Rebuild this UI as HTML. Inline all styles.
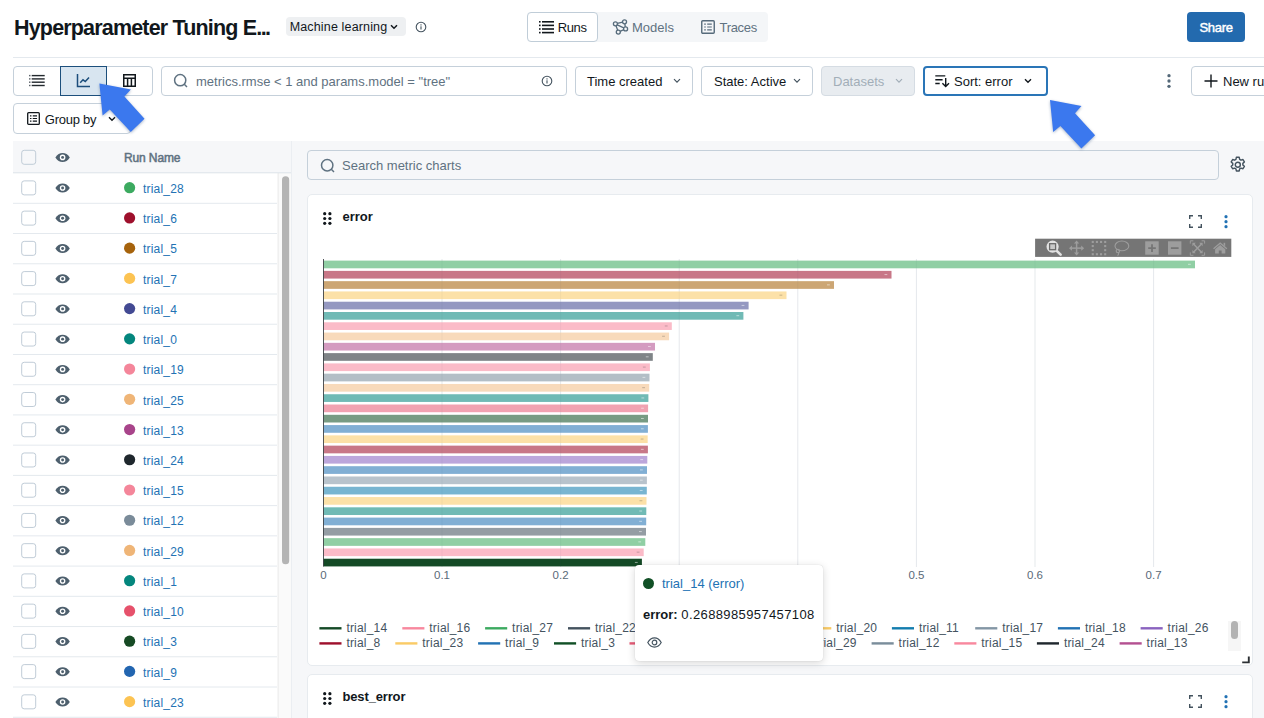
<!DOCTYPE html>
<html><head><meta charset="utf-8">
<style>
*{box-sizing:border-box;margin:0;padding:0}
html,body{width:1264px;height:718px;overflow:hidden;background:#fff}
body{font-family:"Liberation Sans",sans-serif;color:#11171c;font-size:13px;position:relative}
.abs{position:absolute}
.t{position:absolute;white-space:nowrap;line-height:1}
.btn{position:absolute;border:1px solid #c5d0da;border-radius:4px;background:#fff}
svg{position:absolute;overflow:visible}
</style></head><body>

<!-- HEADER -->
<div class="t" id="title" style="left:14px;top:17.8px;font-size:21.5px;font-weight:bold;letter-spacing:-0.83px">Hyperparameter Tuning E<span style="letter-spacing:-1.5px">...</span></div>
<div class="abs" style="left:286px;top:17px;width:120px;height:19px;background:#eef0f2;border-radius:4px"></div>
<div class="t" id="ml" style="left:289.7px;top:20.5px;font-size:12.5px;letter-spacing:0.15px">Machine learning</div>
<svg style="left:389px;top:23px" width="10" height="8" viewBox="0 0 10 8"><path d="M2 2.2 L5 5.2 L8 2.2" fill="none" stroke="#11171c" stroke-width="1.5"/></svg>
<svg style="left:415px;top:21px" width="12" height="12" viewBox="0 0 12 12"><circle cx="6" cy="6" r="4.8" fill="none" stroke="#44535f" stroke-width="1.1"/><rect x="5.45" y="5.3" width="1.1" height="3.2" fill="#44535f"/><rect x="5.45" y="3.3" width="1.1" height="1.2" fill="#44535f"/></svg>

<!-- segmented -->
<div class="abs" style="left:527px;top:12px;width:241px;height:30px;background:#f4f6f8;border-radius:4px"></div>
<div class="btn" style="left:527px;top:12px;width:71px;height:30px;border-color:#c0cdd8"></div>
<svg style="left:539px;top:20px" width="16" height="14" viewBox="0 0 16 14"><g fill="#11171c"><rect x="0" y="1" width="1.6" height="1.6"/><rect x="3" y="1" width="12" height="1.6"/><rect x="0" y="4.6" width="1.6" height="1.6"/><rect x="3" y="4.6" width="12" height="1.6"/><rect x="0" y="8.2" width="1.6" height="1.6"/><rect x="3" y="8.2" width="12" height="1.6"/><rect x="0" y="11.8" width="1.6" height="1.6"/><rect x="3" y="11.8" width="12" height="1.6"/></g></svg>
<div class="t" id="runs" style="left:557.8px;top:20.6px;font-size:13px;letter-spacing:-0.4px">Runs</div>
<div class="t" id="models" style="left:632px;top:20.6px;font-size:13px;color:#5f7281">Models</div>
<div class="t" id="traces" style="left:719.5px;top:20.6px;font-size:13px;letter-spacing:-0.3px;color:#5f7281">Traces</div>

<!-- share -->
<div class="abs" style="left:1187px;top:12px;width:58px;height:30px;background:#236aae;border-radius:4px"></div>
<div class="t" id="share" style="left:1199.5px;top:20.6px;font-size:13px;letter-spacing:-0.3px;-webkit-text-stroke:0.45px #fff;color:#fff">Share</div>

<div class="abs" style="left:13px;top:57px;width:1251px;height:1px;background:#e4e9ee"></div>

<!-- TOOLBAR -->
<div class="btn" style="left:13px;top:66px;width:140px;height:30px"></div>
<div class="abs" style="left:60px;top:66px;width:47px;height:30px;background:#d8e5f0;border:1px solid #1c4f7c"></div>
<div class="btn" style="left:161px;top:66px;width:406px;height:30px"></div>
<div class="t" id="q" style="left:196px;top:74.6px;font-size:13px;color:#5f7281">metrics.rmse &lt; 1 and params.model = "tree"</div>
<div class="btn" style="left:575px;top:66px;width:118px;height:30px"></div>
<div class="t" id="tc" style="left:587px;top:74.6px;font-size:13px">Time created</div>
<div class="btn" style="left:701px;top:66px;width:112px;height:30px"></div>
<div class="t" id="sa" style="left:714px;top:74.6px;font-size:13px">State: Active</div>
<div class="btn" style="left:821px;top:66px;width:94px;height:30px;background:#e8ecf0;border-color:#d5dce3"></div>
<div class="t" id="ds" style="left:833px;top:74.6px;font-size:13px;color:#a2aeb8">Datasets</div>
<div class="btn" style="left:923px;top:66px;width:125px;height:30px;border:2px solid #2a75b7"></div>
<div class="t" id="so" style="left:954px;top:74.6px;font-size:13px">Sort: error</div>
<div class="btn" style="left:1191px;top:66px;width:90px;height:30px"></div>
<div class="t" id="nr" style="left:1223px;top:74.6px;font-size:13px">New run</div>

<div class="btn" style="left:13px;top:103px;width:118px;height:31px"></div>
<div class="t" id="gb" style="left:44.8px;top:112.6px;font-size:13px;letter-spacing:-0.25px">Group by</div>


<!-- toolbar icons -->
<svg style="left:29.3px;top:74.3px" width="16" height="14" viewBox="0 0 16 14"><g fill="#23292e"><rect x="0" y="0.9" width="1.5" height="1.4" fill="#5a6168"/><rect x="2.7" y="0.9" width="13" height="1.4"/><rect x="0" y="4.2" width="1.5" height="1.4" fill="#5a6168"/><rect x="2.7" y="4.2" width="13" height="1.4"/><rect x="0" y="7.5" width="1.5" height="1.4" fill="#5a6168"/><rect x="2.7" y="7.5" width="13" height="1.4"/><rect x="0" y="10.8" width="1.5" height="1.4" fill="#5a6168"/><rect x="2.7" y="10.8" width="13" height="1.4"/></g></svg>
<svg style="left:76px;top:73px" width="16" height="16" viewBox="0 0 16 16"><path d="M1.5 1 V13.5 H14" fill="none" stroke="#1b4d7b" stroke-width="1.5"/><path d="M4.2 9.8 L7 6.8 L9.3 8.6 L13 4.6" fill="none" stroke="#1b4d7b" stroke-width="1.5"/></svg>
<svg style="left:123px;top:74.2px" width="13" height="13" viewBox="0 0 13 13"><rect x="0.75" y="0.75" width="11.5" height="11.5" fill="none" stroke="#11171c" stroke-width="1.5"/><path d="M0.75 4.3 H12.25 M4.6 4.3 V12.25 M8.4 4.3 V12.25" stroke="#11171c" stroke-width="1.5" fill="none"/></svg>
<svg style="left:173px;top:73px" width="16" height="16" viewBox="0 0 16 16"><circle cx="7.2" cy="7.2" r="5.6" fill="none" stroke="#5f7281" stroke-width="1.5"/><path d="M11.3 11.3 L14 14" stroke="#5f7281" stroke-width="1.5"/></svg>
<svg style="left:541px;top:75px" width="12" height="12" viewBox="0 0 12 12"><circle cx="6" cy="6" r="4.8" fill="none" stroke="#44535f" stroke-width="1.1"/><rect x="5.45" y="5.3" width="1.1" height="3.2" fill="#44535f"/><rect x="5.45" y="3.3" width="1.1" height="1.2" fill="#44535f"/></svg>
<svg style="left:672px;top:77px" width="10" height="8" viewBox="0 0 10 8"><path d="M2 2.2 L5 5.2 L8 2.2" fill="none" stroke="#44535f" stroke-width="1.2"/></svg>
<svg style="left:792px;top:77px" width="10" height="8" viewBox="0 0 10 8"><path d="M2 2.2 L5 5.2 L8 2.2" fill="none" stroke="#44535f" stroke-width="1.2"/></svg>
<svg style="left:894px;top:77px" width="10" height="8" viewBox="0 0 10 8"><path d="M2 2.2 L5 5.2 L8 2.2" fill="none" stroke="#a2aeb8" stroke-width="1.2"/></svg>
<svg style="left:1023px;top:77px" width="10" height="8" viewBox="0 0 10 8"><path d="M2 2.2 L5 5.2 L8 2.2" fill="none" stroke="#11171c" stroke-width="1.4"/></svg>
<svg style="left:0;top:0" width="1264" height="718" viewBox="0 0 1264 718"><path d="M935.3 75.9 H945.3 M935.3 79.7 H942.6 M935.3 83.5 H939.7" stroke="#11171c" stroke-width="1.4" fill="none"/><path d="M945.7 78 V86.4 M942.4 83.3 L945.7 86.6 L949 83.3" stroke="#11171c" stroke-width="1.4" fill="none"/></svg>
<svg style="left:1167px;top:73px" width="4" height="16" viewBox="0 0 4 16"><circle cx="2" cy="2.7" r="1.65" fill="#536878"/><circle cx="2" cy="8" r="1.65" fill="#536878"/><circle cx="2" cy="13.3" r="1.65" fill="#536878"/></svg>
<svg style="left:1204px;top:74px" width="14" height="14" viewBox="0 0 14 14"><path d="M7 0.5 V13.5 M0.5 7 H13.5" stroke="#11171c" stroke-width="1.4"/></svg>
<svg style="left:26.6px;top:112px" width="13" height="13" viewBox="0 0 14 14"><rect x="0.75" y="0.75" width="12.5" height="12.5" rx="1" fill="none" stroke="#11171c" stroke-width="1.4"/><path d="M3.2 4.2 H4.8 M6.2 4.2 H10.8 M3.2 7 H4.8 M6.2 7 H10.8 M3.2 9.8 H4.8 M6.2 9.8 H10.8" stroke="#11171c" stroke-width="1.3"/></svg>
<svg style="left:107px;top:115px" width="10" height="8" viewBox="0 0 10 8"><path d="M2 2.2 L5 5.2 L8 2.2" fill="none" stroke="#11171c" stroke-width="1.4"/></svg>
<!-- segmented icons -->
<svg style="left:606px;top:14px" width="30" height="26" viewBox="0 0 30 26"><g fill="none" stroke="#566b7b" stroke-width="1.3"><circle cx="9.4" cy="9.8" r="2"/><circle cx="18.55" cy="7.8" r="2"/><circle cx="19.6" cy="14.9" r="2"/><circle cx="12.3" cy="18.1" r="2"/><path d="M11.4 9.4 L16.6 8.2 M11.2 10.8 L17.8 13.9 M10 11.8 L11.7 16.2 M18.85 9.8 L19.3 12.9 M17.8 15.7 L14.1 17.3"/></g></svg>
<svg style="left:700.5px;top:20px" width="14" height="14" viewBox="0 0 14 14"><rect x="0.75" y="0.75" width="12.5" height="12.5" rx="1" fill="none" stroke="#566b7b" stroke-width="1.4"/><path d="M3.2 4.2 H4.8 M6.2 4.2 H10.8 M3.2 7 H4.8 M6.2 7 H10.8 M3.2 9.8 H4.8 M6.2 9.8 H10.8" stroke="#566b7b" stroke-width="1.2"/></svg>
<!--LEFT-->
<div class="abs" style="left:13px;top:141px;width:1251px;height:580px;background:#f6f7f9"></div>
<svg style="left:0;top:0" width="1264" height="718" viewBox="0 0 1264 718"><rect x="13" y="172.8" width="278.5" height="546" fill="#fff"/><rect x="291" y="141" width="1" height="580" fill="#ebeef2"/><rect x="278" y="173" width="13" height="546" fill="#fafafa"/><rect x="277.6" y="173" width="1" height="546" fill="#e9e9e9"/><rect x="21.7" y="150.30" width="14" height="14" rx="2.5" fill="#f6f7f9" stroke="#c0ccd7" stroke-width="1"/><g transform="translate(55.2,152.70000000000002)"><path d="M0.2 4.7 C2 1.5 4.6 0.2 7.4 0.2 C10.2 0.2 12.8 1.5 14.6 4.7 C12.8 7.9 10.2 9.2 7.4 9.2 C4.6 9.2 2 7.9 0.2 4.7 Z" fill="#4d5f6d"/><circle cx="7.4" cy="4.7" r="2.8" fill="#fff"/><circle cx="7.4" cy="4.7" r="1.45" fill="#4d5f6d"/></g><rect x="13" y="172.3" width="278" height="1" fill="#dce3e9"/><rect x="21.7" y="180.89" width="14" height="14" rx="2.5" fill="#fff" stroke="#c0ccd7" stroke-width="1"/><g transform="translate(55.2,183.29)"><path d="M0.2 4.7 C2 1.5 4.6 0.2 7.4 0.2 C10.2 0.2 12.8 1.5 14.6 4.7 C12.8 7.9 10.2 9.2 7.4 9.2 C4.6 9.2 2 7.9 0.2 4.7 Z" fill="#4d5f6d"/><circle cx="7.4" cy="4.7" r="2.8" fill="#fff"/><circle cx="7.4" cy="4.7" r="1.45" fill="#4d5f6d"/></g><circle cx="129.6" cy="187.69" r="5.6" fill="#3caa60"/><rect x="13" y="202.80" width="264" height="1" fill="#e4e9ee"/><rect x="21.7" y="211.12" width="14" height="14" rx="2.5" fill="#fff" stroke="#c0ccd7" stroke-width="1"/><g transform="translate(55.2,213.52)"><path d="M0.2 4.7 C2 1.5 4.6 0.2 7.4 0.2 C10.2 0.2 12.8 1.5 14.6 4.7 C12.8 7.9 10.2 9.2 7.4 9.2 C4.6 9.2 2 7.9 0.2 4.7 Z" fill="#4d5f6d"/><circle cx="7.4" cy="4.7" r="2.8" fill="#fff"/><circle cx="7.4" cy="4.7" r="1.45" fill="#4d5f6d"/></g><circle cx="129.6" cy="217.92" r="5.6" fill="#9e102c"/><rect x="13" y="233.03" width="264" height="1" fill="#e4e9ee"/><rect x="21.7" y="241.35" width="14" height="14" rx="2.5" fill="#fff" stroke="#c0ccd7" stroke-width="1"/><g transform="translate(55.2,243.75)"><path d="M0.2 4.7 C2 1.5 4.6 0.2 7.4 0.2 C10.2 0.2 12.8 1.5 14.6 4.7 C12.8 7.9 10.2 9.2 7.4 9.2 C4.6 9.2 2 7.9 0.2 4.7 Z" fill="#4d5f6d"/><circle cx="7.4" cy="4.7" r="2.8" fill="#fff"/><circle cx="7.4" cy="4.7" r="1.45" fill="#4d5f6d"/></g><circle cx="129.6" cy="248.15" r="5.6" fill="#a6630c"/><rect x="13" y="263.27" width="264" height="1" fill="#e4e9ee"/><rect x="21.7" y="271.58" width="14" height="14" rx="2.5" fill="#fff" stroke="#c0ccd7" stroke-width="1"/><g transform="translate(55.2,273.98)"><path d="M0.2 4.7 C2 1.5 4.6 0.2 7.4 0.2 C10.2 0.2 12.8 1.5 14.6 4.7 C12.8 7.9 10.2 9.2 7.4 9.2 C4.6 9.2 2 7.9 0.2 4.7 Z" fill="#4d5f6d"/><circle cx="7.4" cy="4.7" r="2.8" fill="#fff"/><circle cx="7.4" cy="4.7" r="1.45" fill="#4d5f6d"/></g><circle cx="129.6" cy="278.38" r="5.6" fill="#fcc352"/><rect x="13" y="293.50" width="264" height="1" fill="#e4e9ee"/><rect x="21.7" y="301.81" width="14" height="14" rx="2.5" fill="#fff" stroke="#c0ccd7" stroke-width="1"/><g transform="translate(55.2,304.21)"><path d="M0.2 4.7 C2 1.5 4.6 0.2 7.4 0.2 C10.2 0.2 12.8 1.5 14.6 4.7 C12.8 7.9 10.2 9.2 7.4 9.2 C4.6 9.2 2 7.9 0.2 4.7 Z" fill="#4d5f6d"/><circle cx="7.4" cy="4.7" r="2.8" fill="#fff"/><circle cx="7.4" cy="4.7" r="1.45" fill="#4d5f6d"/></g><circle cx="129.6" cy="308.61" r="5.6" fill="#434a93"/><rect x="13" y="323.73" width="264" height="1" fill="#e4e9ee"/><rect x="21.7" y="332.05" width="14" height="14" rx="2.5" fill="#fff" stroke="#c0ccd7" stroke-width="1"/><g transform="translate(55.2,334.45)"><path d="M0.2 4.7 C2 1.5 4.6 0.2 7.4 0.2 C10.2 0.2 12.8 1.5 14.6 4.7 C12.8 7.9 10.2 9.2 7.4 9.2 C4.6 9.2 2 7.9 0.2 4.7 Z" fill="#4d5f6d"/><circle cx="7.4" cy="4.7" r="2.8" fill="#fff"/><circle cx="7.4" cy="4.7" r="1.45" fill="#4d5f6d"/></g><circle cx="129.6" cy="338.85" r="5.6" fill="#04867d"/><rect x="13" y="353.96" width="264" height="1" fill="#e4e9ee"/><rect x="21.7" y="362.28" width="14" height="14" rx="2.5" fill="#fff" stroke="#c0ccd7" stroke-width="1"/><g transform="translate(55.2,364.68)"><path d="M0.2 4.7 C2 1.5 4.6 0.2 7.4 0.2 C10.2 0.2 12.8 1.5 14.6 4.7 C12.8 7.9 10.2 9.2 7.4 9.2 C4.6 9.2 2 7.9 0.2 4.7 Z" fill="#4d5f6d"/><circle cx="7.4" cy="4.7" r="2.8" fill="#fff"/><circle cx="7.4" cy="4.7" r="1.45" fill="#4d5f6d"/></g><circle cx="129.6" cy="369.08" r="5.6" fill="#f4869a"/><rect x="13" y="384.19" width="264" height="1" fill="#e4e9ee"/><rect x="21.7" y="392.51" width="14" height="14" rx="2.5" fill="#fff" stroke="#c0ccd7" stroke-width="1"/><g transform="translate(55.2,394.91)"><path d="M0.2 4.7 C2 1.5 4.6 0.2 7.4 0.2 C10.2 0.2 12.8 1.5 14.6 4.7 C12.8 7.9 10.2 9.2 7.4 9.2 C4.6 9.2 2 7.9 0.2 4.7 Z" fill="#4d5f6d"/><circle cx="7.4" cy="4.7" r="2.8" fill="#fff"/><circle cx="7.4" cy="4.7" r="1.45" fill="#4d5f6d"/></g><circle cx="129.6" cy="399.31" r="5.6" fill="#efb577"/><rect x="13" y="414.43" width="264" height="1" fill="#e4e9ee"/><rect x="21.7" y="422.74" width="14" height="14" rx="2.5" fill="#fff" stroke="#c0ccd7" stroke-width="1"/><g transform="translate(55.2,425.14)"><path d="M0.2 4.7 C2 1.5 4.6 0.2 7.4 0.2 C10.2 0.2 12.8 1.5 14.6 4.7 C12.8 7.9 10.2 9.2 7.4 9.2 C4.6 9.2 2 7.9 0.2 4.7 Z" fill="#4d5f6d"/><circle cx="7.4" cy="4.7" r="2.8" fill="#fff"/><circle cx="7.4" cy="4.7" r="1.45" fill="#4d5f6d"/></g><circle cx="129.6" cy="429.54" r="5.6" fill="#a8448a"/><rect x="13" y="444.66" width="264" height="1" fill="#e4e9ee"/><rect x="21.7" y="452.97" width="14" height="14" rx="2.5" fill="#fff" stroke="#c0ccd7" stroke-width="1"/><g transform="translate(55.2,455.37)"><path d="M0.2 4.7 C2 1.5 4.6 0.2 7.4 0.2 C10.2 0.2 12.8 1.5 14.6 4.7 C12.8 7.9 10.2 9.2 7.4 9.2 C4.6 9.2 2 7.9 0.2 4.7 Z" fill="#4d5f6d"/><circle cx="7.4" cy="4.7" r="2.8" fill="#fff"/><circle cx="7.4" cy="4.7" r="1.45" fill="#4d5f6d"/></g><circle cx="129.6" cy="459.77" r="5.6" fill="#1f272d"/><rect x="13" y="474.89" width="264" height="1" fill="#e4e9ee"/><rect x="21.7" y="483.21" width="14" height="14" rx="2.5" fill="#fff" stroke="#c0ccd7" stroke-width="1"/><g transform="translate(55.2,485.61)"><path d="M0.2 4.7 C2 1.5 4.6 0.2 7.4 0.2 C10.2 0.2 12.8 1.5 14.6 4.7 C12.8 7.9 10.2 9.2 7.4 9.2 C4.6 9.2 2 7.9 0.2 4.7 Z" fill="#4d5f6d"/><circle cx="7.4" cy="4.7" r="2.8" fill="#fff"/><circle cx="7.4" cy="4.7" r="1.45" fill="#4d5f6d"/></g><circle cx="129.6" cy="490.01" r="5.6" fill="#f4869a"/><rect x="13" y="505.12" width="264" height="1" fill="#e4e9ee"/><rect x="21.7" y="513.44" width="14" height="14" rx="2.5" fill="#fff" stroke="#c0ccd7" stroke-width="1"/><g transform="translate(55.2,515.84)"><path d="M0.2 4.7 C2 1.5 4.6 0.2 7.4 0.2 C10.2 0.2 12.8 1.5 14.6 4.7 C12.8 7.9 10.2 9.2 7.4 9.2 C4.6 9.2 2 7.9 0.2 4.7 Z" fill="#4d5f6d"/><circle cx="7.4" cy="4.7" r="2.8" fill="#fff"/><circle cx="7.4" cy="4.7" r="1.45" fill="#4d5f6d"/></g><circle cx="129.6" cy="520.24" r="5.6" fill="#7a8b99"/><rect x="13" y="535.35" width="264" height="1" fill="#e4e9ee"/><rect x="21.7" y="543.67" width="14" height="14" rx="2.5" fill="#fff" stroke="#c0ccd7" stroke-width="1"/><g transform="translate(55.2,546.07)"><path d="M0.2 4.7 C2 1.5 4.6 0.2 7.4 0.2 C10.2 0.2 12.8 1.5 14.6 4.7 C12.8 7.9 10.2 9.2 7.4 9.2 C4.6 9.2 2 7.9 0.2 4.7 Z" fill="#4d5f6d"/><circle cx="7.4" cy="4.7" r="2.8" fill="#fff"/><circle cx="7.4" cy="4.7" r="1.45" fill="#4d5f6d"/></g><circle cx="129.6" cy="550.47" r="5.6" fill="#efb577"/><rect x="13" y="565.59" width="264" height="1" fill="#e4e9ee"/><rect x="21.7" y="573.90" width="14" height="14" rx="2.5" fill="#fff" stroke="#c0ccd7" stroke-width="1"/><g transform="translate(55.2,576.3)"><path d="M0.2 4.7 C2 1.5 4.6 0.2 7.4 0.2 C10.2 0.2 12.8 1.5 14.6 4.7 C12.8 7.9 10.2 9.2 7.4 9.2 C4.6 9.2 2 7.9 0.2 4.7 Z" fill="#4d5f6d"/><circle cx="7.4" cy="4.7" r="2.8" fill="#fff"/><circle cx="7.4" cy="4.7" r="1.45" fill="#4d5f6d"/></g><circle cx="129.6" cy="580.70" r="5.6" fill="#04867d"/><rect x="13" y="595.82" width="264" height="1" fill="#e4e9ee"/><rect x="21.7" y="604.13" width="14" height="14" rx="2.5" fill="#fff" stroke="#c0ccd7" stroke-width="1"/><g transform="translate(55.2,606.53)"><path d="M0.2 4.7 C2 1.5 4.6 0.2 7.4 0.2 C10.2 0.2 12.8 1.5 14.6 4.7 C12.8 7.9 10.2 9.2 7.4 9.2 C4.6 9.2 2 7.9 0.2 4.7 Z" fill="#4d5f6d"/><circle cx="7.4" cy="4.7" r="2.8" fill="#fff"/><circle cx="7.4" cy="4.7" r="1.45" fill="#4d5f6d"/></g><circle cx="129.6" cy="610.93" r="5.6" fill="#e6516b"/><rect x="13" y="626.05" width="264" height="1" fill="#e4e9ee"/><rect x="21.7" y="634.37" width="14" height="14" rx="2.5" fill="#fff" stroke="#c0ccd7" stroke-width="1"/><g transform="translate(55.2,636.77)"><path d="M0.2 4.7 C2 1.5 4.6 0.2 7.4 0.2 C10.2 0.2 12.8 1.5 14.6 4.7 C12.8 7.9 10.2 9.2 7.4 9.2 C4.6 9.2 2 7.9 0.2 4.7 Z" fill="#4d5f6d"/><circle cx="7.4" cy="4.7" r="2.8" fill="#fff"/><circle cx="7.4" cy="4.7" r="1.45" fill="#4d5f6d"/></g><circle cx="129.6" cy="641.17" r="5.6" fill="#164a24"/><rect x="13" y="656.28" width="264" height="1" fill="#e4e9ee"/><rect x="21.7" y="664.60" width="14" height="14" rx="2.5" fill="#fff" stroke="#c0ccd7" stroke-width="1"/><g transform="translate(55.2,667.0)"><path d="M0.2 4.7 C2 1.5 4.6 0.2 7.4 0.2 C10.2 0.2 12.8 1.5 14.6 4.7 C12.8 7.9 10.2 9.2 7.4 9.2 C4.6 9.2 2 7.9 0.2 4.7 Z" fill="#4d5f6d"/><circle cx="7.4" cy="4.7" r="2.8" fill="#fff"/><circle cx="7.4" cy="4.7" r="1.45" fill="#4d5f6d"/></g><circle cx="129.6" cy="671.40" r="5.6" fill="#2265b0"/><rect x="13" y="686.51" width="264" height="1" fill="#e4e9ee"/><rect x="21.7" y="694.83" width="14" height="14" rx="2.5" fill="#fff" stroke="#c0ccd7" stroke-width="1"/><g transform="translate(55.2,697.23)"><path d="M0.2 4.7 C2 1.5 4.6 0.2 7.4 0.2 C10.2 0.2 12.8 1.5 14.6 4.7 C12.8 7.9 10.2 9.2 7.4 9.2 C4.6 9.2 2 7.9 0.2 4.7 Z" fill="#4d5f6d"/><circle cx="7.4" cy="4.7" r="2.8" fill="#fff"/><circle cx="7.4" cy="4.7" r="1.45" fill="#4d5f6d"/></g><circle cx="129.6" cy="701.63" r="5.6" fill="#fcc352"/><rect x="13" y="716.75" width="264" height="1" fill="#e4e9ee"/><rect x="282" y="176.3" width="7.2" height="388" rx="3.6" fill="#b4b4b4"/></svg>
<div class="t" id="rn" style="left:124px;top:152.4px;font-size:12px;letter-spacing:-0.12px;-webkit-text-stroke:0.5px #5f7281;color:#5f7281">Run Name</div>
<div class="t" style="left:143px;top:182.89px;font-size:12px;letter-spacing:0.2px;color:#2272b4">trial_28</div>
<div class="t" style="left:143px;top:213.12px;font-size:12px;letter-spacing:0.2px;color:#2272b4">trial_6</div>
<div class="t" style="left:143px;top:243.35px;font-size:12px;letter-spacing:0.2px;color:#2272b4">trial_5</div>
<div class="t" style="left:143px;top:273.58px;font-size:12px;letter-spacing:0.2px;color:#2272b4">trial_7</div>
<div class="t" style="left:143px;top:303.81px;font-size:12px;letter-spacing:0.2px;color:#2272b4">trial_4</div>
<div class="t" style="left:143px;top:334.05px;font-size:12px;letter-spacing:0.2px;color:#2272b4">trial_0</div>
<div class="t" style="left:143px;top:364.28px;font-size:12px;letter-spacing:0.2px;color:#2272b4">trial_19</div>
<div class="t" style="left:143px;top:394.51px;font-size:12px;letter-spacing:0.2px;color:#2272b4">trial_25</div>
<div class="t" style="left:143px;top:424.74px;font-size:12px;letter-spacing:0.2px;color:#2272b4">trial_13</div>
<div class="t" style="left:143px;top:454.97px;font-size:12px;letter-spacing:0.2px;color:#2272b4">trial_24</div>
<div class="t" style="left:143px;top:485.21px;font-size:12px;letter-spacing:0.2px;color:#2272b4">trial_15</div>
<div class="t" style="left:143px;top:515.44px;font-size:12px;letter-spacing:0.2px;color:#2272b4">trial_12</div>
<div class="t" style="left:143px;top:545.67px;font-size:12px;letter-spacing:0.2px;color:#2272b4">trial_29</div>
<div class="t" style="left:143px;top:575.90px;font-size:12px;letter-spacing:0.2px;color:#2272b4">trial_1</div>
<div class="t" style="left:143px;top:606.13px;font-size:12px;letter-spacing:0.2px;color:#2272b4">trial_10</div>
<div class="t" style="left:143px;top:636.37px;font-size:12px;letter-spacing:0.2px;color:#2272b4">trial_3</div>
<div class="t" style="left:143px;top:666.60px;font-size:12px;letter-spacing:0.2px;color:#2272b4">trial_9</div>
<div class="t" style="left:143px;top:696.83px;font-size:12px;letter-spacing:0.2px;color:#2272b4">trial_23</div>
<!--/LEFT-->
<!--RIGHT-->
<div class="btn" style="left:307px;top:150px;width:912px;height:30px;background:#f6f7f9;border-color:#c5d0da"></div>
<svg style="left:319.7px;top:157.5px" width="16" height="16" viewBox="0 0 16 16"><circle cx="7.2" cy="7.2" r="5.7" fill="none" stroke="#5f7281" stroke-width="1.5"/><path d="M11.3 11.3 L14 14" stroke="#5f7281" stroke-width="1.5"/></svg>
<div class="t" id="smc" style="left:342px;top:158.5px;font-size:13px;color:#5f7281">Search metric charts</div>
<svg style="left:1229.2px;top:156.3px" width="17.6" height="17.6" viewBox="0 0 16 16"><g fill="none" stroke="#44535f" stroke-width="1.3"><circle cx="8" cy="8" r="2.3"/><path d="M6.7 1.2h2.6l.4 1.9 1.2.7 1.8-.6 1.3 2.2-1.4 1.3v1.4l1.4 1.3-1.3 2.2-1.8-.6-1.2.7-.4 1.9H6.7l-.4-1.9-1.2-.7-1.8.6L2 9.4l1.4-1.3V6.7L2 5.4l1.3-2.2 1.8.6 1.2-.7z" stroke-linejoin="round"/></g></svg>
<div class="abs" style="left:307px;top:194px;width:946px;height:472px;background:#fff;border:1px solid #e7ebef;border-radius:5px"></div>
<div class="abs" style="left:307px;top:674px;width:946px;height:60px;background:#fff;border:1px solid #e7ebef;border-radius:5px"></div>
<svg style="left:322.7px;top:212px" width="9" height="13" viewBox="0 0 9 13"><g fill="#11171c"><circle cx="1.7" cy="1.7" r="1.6"/><circle cx="6.9" cy="1.7" r="1.6"/><circle cx="1.7" cy="6.5" r="1.6"/><circle cx="6.9" cy="6.5" r="1.6"/><circle cx="1.7" cy="11.3" r="1.6"/><circle cx="6.9" cy="11.3" r="1.6"/></g></svg>
<div class="t" id="err" style="left:342.5px;top:209.5px;font-size:13px;font-weight:bold">error</div>
<svg style="left:1188.8px;top:215.2px" width="13" height="13" viewBox="0 0 13 13"><path d="M0.7 4 V0.7 H4 M9 0.7 H12.3 V4 M12.3 9 V12.3 H9 M4 12.3 H0.7 V9" fill="none" stroke="#44535f" stroke-width="1.4"/></svg>
<svg style="left:1223.8px;top:215px" width="4" height="14" viewBox="0 0 4 14"><circle cx="2" cy="1.7" r="1.6" fill="#2272b4"/><circle cx="2" cy="6.7" r="1.6" fill="#2272b4"/><circle cx="2" cy="11.7" r="1.6" fill="#2272b4"/></svg>
<svg style="left:322.7px;top:692px" width="9" height="13" viewBox="0 0 9 13"><g fill="#11171c"><circle cx="1.7" cy="1.7" r="1.6"/><circle cx="6.9" cy="1.7" r="1.6"/><circle cx="1.7" cy="6.5" r="1.6"/><circle cx="6.9" cy="6.5" r="1.6"/><circle cx="1.7" cy="11.3" r="1.6"/><circle cx="6.9" cy="11.3" r="1.6"/></g></svg>
<div class="t" id="berr" style="left:342.5px;top:689.5px;font-size:13px;font-weight:bold;letter-spacing:-0.15px">best_error</div>
<svg style="left:1188.8px;top:695.2px" width="13" height="13" viewBox="0 0 13 13"><path d="M0.7 4 V0.7 H4 M9 0.7 H12.3 V4 M12.3 9 V12.3 H9 M4 12.3 H0.7 V9" fill="none" stroke="#44535f" stroke-width="1.4"/></svg>
<svg style="left:1223.8px;top:695px" width="4" height="14" viewBox="0 0 4 14"><circle cx="2" cy="1.7" r="1.6" fill="#2272b4"/><circle cx="2" cy="6.7" r="1.6" fill="#2272b4"/><circle cx="2" cy="11.7" r="1.6" fill="#2272b4"/></svg>
<svg style="left:0;top:0" width="1264" height="718" viewBox="0 0 1264 718"><rect x="441.50" y="259" width="1" height="308" fill="#eff1f4"/><rect x="560.10" y="259" width="1" height="308" fill="#eff1f4"/><rect x="678.70" y="259" width="1" height="308" fill="#eff1f4"/><rect x="797.30" y="259" width="1" height="308" fill="#eff1f4"/><rect x="915.90" y="259" width="1" height="308" fill="#eff1f4"/><rect x="1034.50" y="259" width="1" height="308" fill="#eff1f4"/><rect x="1153.10" y="259" width="1" height="308" fill="#eff1f4"/><rect x="323.4" y="260.60" width="871.6" height="7.7" fill="#90cfa4"/><rect x="1188.0" y="263.80" width="2.8" height="1" fill="rgba(255,255,255,0.5)"/><rect x="323.4" y="270.88" width="568.1" height="7.7" fill="#c87787"/><rect x="884.5" y="274.08" width="2.8" height="1" fill="rgba(255,255,255,0.5)"/><rect x="323.4" y="281.16" width="510.6" height="7.7" fill="#cca674"/><rect x="827.0" y="284.36" width="2.8" height="1" fill="rgba(255,255,255,0.5)"/><rect x="323.4" y="291.44" width="463.1" height="7.7" fill="#fce1a8"/><rect x="779.5" y="294.64" width="2.8" height="1" fill="rgba(60,60,60,0.28)"/><rect x="323.4" y="301.72" width="425.2" height="7.7" fill="#9498c1"/><rect x="741.6" y="304.92" width="2.8" height="1" fill="rgba(255,255,255,0.5)"/><rect x="323.4" y="312.00" width="420.0" height="7.7" fill="#70bab5"/><rect x="736.4" y="315.20" width="2.8" height="1" fill="rgba(255,255,255,0.5)"/><rect x="323.4" y="322.28" width="348.4" height="7.7" fill="#fbbbc8"/><rect x="664.8" y="325.48" width="2.8" height="1" fill="rgba(60,60,60,0.28)"/><rect x="323.4" y="332.56" width="345.7" height="7.7" fill="#f8dabb"/><rect x="662.1" y="335.76" width="2.8" height="1" fill="rgba(60,60,60,0.28)"/><rect x="323.4" y="342.84" width="331.6" height="7.7" fill="#d49bc0"/><rect x="648.0" y="346.04" width="2.8" height="1" fill="rgba(255,255,255,0.5)"/><rect x="323.4" y="353.12" width="329.4" height="7.7" fill="#7f8487"/><rect x="645.8" y="356.32" width="2.8" height="1" fill="rgba(255,255,255,0.5)"/><rect x="323.4" y="363.40" width="326.5" height="7.7" fill="#fbbbc8"/><rect x="642.9" y="366.60" width="2.8" height="1" fill="rgba(60,60,60,0.28)"/><rect x="323.4" y="373.68" width="326.1" height="7.7" fill="#b3bec6"/><rect x="642.5" y="376.88" width="2.8" height="1" fill="rgba(255,255,255,0.5)"/><rect x="323.4" y="383.96" width="325.8" height="7.7" fill="#f8dabb"/><rect x="642.2" y="387.16" width="2.8" height="1" fill="rgba(60,60,60,0.28)"/><rect x="323.4" y="394.24" width="325.0" height="7.7" fill="#70bab5"/><rect x="641.4" y="397.44" width="2.8" height="1" fill="rgba(255,255,255,0.5)"/><rect x="323.4" y="404.52" width="324.7" height="7.7" fill="#f1a2b1"/><rect x="641.1" y="407.72" width="2.8" height="1" fill="rgba(255,255,255,0.5)"/><rect x="323.4" y="414.80" width="324.6" height="7.7" fill="#779b83"/><rect x="641.0" y="418.00" width="2.8" height="1" fill="rgba(255,255,255,0.5)"/><rect x="323.4" y="425.08" width="324.5" height="7.7" fill="#81afd4"/><rect x="640.9" y="428.28" width="2.8" height="1" fill="rgba(255,255,255,0.5)"/><rect x="323.4" y="435.36" width="324.3" height="7.7" fill="#fce1a8"/><rect x="640.7" y="438.56" width="2.8" height="1" fill="rgba(60,60,60,0.28)"/><rect x="323.4" y="445.64" width="324.5" height="7.7" fill="#c87787"/><rect x="640.9" y="448.84" width="2.8" height="1" fill="rgba(255,255,255,0.5)"/><rect x="323.4" y="455.92" width="323.9" height="7.7" fill="#bca6db"/><rect x="640.3" y="459.12" width="2.8" height="1" fill="rgba(255,255,255,0.5)"/><rect x="323.4" y="466.20" width="323.6" height="7.7" fill="#81afd4"/><rect x="640.0" y="469.40" width="2.8" height="1" fill="rgba(255,255,255,0.5)"/><rect x="323.4" y="476.48" width="323.5" height="7.7" fill="#b8c3cc"/><rect x="639.9" y="479.68" width="2.8" height="1" fill="rgba(255,255,255,0.5)"/><rect x="323.4" y="486.76" width="323.4" height="7.7" fill="#78b5d1"/><rect x="639.8" y="489.96" width="2.8" height="1" fill="rgba(255,255,255,0.5)"/><rect x="323.4" y="497.04" width="323.1" height="7.7" fill="#fce1a8"/><rect x="639.5" y="500.24" width="2.8" height="1" fill="rgba(60,60,60,0.28)"/><rect x="323.4" y="507.32" width="322.9" height="7.7" fill="#70bab5"/><rect x="639.3" y="510.52" width="2.8" height="1" fill="rgba(255,255,255,0.5)"/><rect x="323.4" y="517.60" width="322.8" height="7.7" fill="#81afd4"/><rect x="639.2" y="520.80" width="2.8" height="1" fill="rgba(255,255,255,0.5)"/><rect x="323.4" y="527.88" width="322.6" height="7.7" fill="#949da4"/><rect x="639.0" y="531.08" width="2.8" height="1" fill="rgba(255,255,255,0.5)"/><rect x="323.4" y="538.16" width="321.9" height="7.7" fill="#90cfa4"/><rect x="638.3" y="541.36" width="2.8" height="1" fill="rgba(255,255,255,0.5)"/><rect x="323.4" y="548.44" width="320.3" height="7.7" fill="#fbbbc8"/><rect x="636.7" y="551.64" width="2.8" height="1" fill="rgba(60,60,60,0.28)"/><rect x="323.4" y="558.72" width="318.5" height="7.7" fill="#144a26"/><rect x="634.9" y="561.92" width="2.8" height="1" fill="rgba(255,255,255,0.5)"/><rect x="441.50" y="259" width="1" height="308" fill="rgba(60,80,100,0.05)"/><rect x="560.10" y="259" width="1" height="308" fill="rgba(60,80,100,0.05)"/><rect x="678.70" y="259" width="1" height="308" fill="rgba(60,80,100,0.05)"/><rect x="797.30" y="259" width="1" height="308" fill="rgba(60,80,100,0.05)"/><rect x="915.90" y="259" width="1" height="308" fill="rgba(60,80,100,0.05)"/><rect x="1034.50" y="259" width="1" height="308" fill="rgba(60,80,100,0.05)"/><rect x="1153.10" y="259" width="1" height="308" fill="rgba(60,80,100,0.05)"/><rect x="323.05" y="259" width="0.85" height="307.5" fill="#33383d"/></svg>
<div class="t" style="left:303.4px;top:569.5px;width:40px;text-align:center;font-size:11.5px;color:#5a6a78">0</div>
<div class="t" style="left:422.0px;top:569.5px;width:40px;text-align:center;font-size:11.5px;color:#5a6a78">0.1</div>
<div class="t" style="left:540.6px;top:569.5px;width:40px;text-align:center;font-size:11.5px;color:#5a6a78">0.2</div>
<div class="t" style="left:659.2px;top:569.5px;width:40px;text-align:center;font-size:11.5px;color:#5a6a78">0.3</div>
<div class="t" style="left:777.8px;top:569.5px;width:40px;text-align:center;font-size:11.5px;color:#5a6a78">0.4</div>
<div class="t" style="left:896.4px;top:569.5px;width:40px;text-align:center;font-size:11.5px;color:#5a6a78">0.5</div>
<div class="t" style="left:1015.0px;top:569.5px;width:40px;text-align:center;font-size:11.5px;color:#5a6a78">0.6</div>
<div class="t" style="left:1133.6px;top:569.5px;width:40px;text-align:center;font-size:11.5px;color:#5a6a78">0.7</div>
<svg style="left:0;top:0" width="1264" height="718" viewBox="0 0 1264 718"><rect x="1035.1" y="238.7" width="196.2" height="18.2" fill="#757575"/><path d="M1056.5 250.6 L1060.6 254.7" stroke="#e2e2e2" stroke-width="2.6" stroke-linecap="round"/><circle cx="1052.6" cy="246.7" r="6.1" fill="#e2e2e2"/><rect x="1049.6" y="243.7" width="6" height="6" fill="#c9c9c9" stroke="#6a6a6a" stroke-width="1.3"/><g fill="#9d9d9d" stroke="none"><rect x="1070.3" y="247.4" width="12.6" height="1.5"/><rect x="1075.85" y="242" width="1.5" height="12.4"/><path d="M1076.6 240.6 L1079.2 243.6 H1074 Z M1076.6 255.6 L1079.2 252.6 H1074 Z M1069 248.15 L1072 245.5 V250.8 Z M1084.2 248.15 L1081.2 245.5 V250.8 Z"/></g><g fill="#9d9d9d"><rect x="1091.7" y="240.9" width="2.1" height="2.1"/><rect x="1091.7" y="245.0" width="2.1" height="2.1"/><rect x="1091.7" y="249.1" width="2.1" height="2.1"/><rect x="1091.7" y="253.2" width="2.1" height="2.1"/><rect x="1095.85" y="240.9" width="2.1" height="2.1"/><rect x="1095.85" y="253.2" width="2.1" height="2.1"/><rect x="1100.0" y="240.9" width="2.1" height="2.1"/><rect x="1100.0" y="253.2" width="2.1" height="2.1"/><rect x="1104.15" y="240.9" width="2.1" height="2.1"/><rect x="1104.15" y="245.0" width="2.1" height="2.1"/><rect x="1104.15" y="249.1" width="2.1" height="2.1"/><rect x="1104.15" y="253.2" width="2.1" height="2.1"/></g><g fill="none" stroke="#9d9d9d" stroke-width="1.1"><ellipse cx="1121.9" cy="245.9" rx="6.9" ry="4.9"/><circle cx="1117.9" cy="251" r="1.7"/><path d="M1118.6 252.6 Q1118.9 254.4 1117.6 255.6"/></g><rect x="1145.2" y="241.3" width="13.5" height="13.4" fill="#9d9d9d"/><path d="M1148.2 248.1 H1155.8 M1152 244.3 V251.9" stroke="#757575" stroke-width="1.8"/><rect x="1168" y="241.3" width="13.4" height="13.4" fill="#9d9d9d"/><path d="M1170.9 248.1 H1178.6" stroke="#757575" stroke-width="1.8"/><g fill="none" stroke="#9d9d9d" stroke-width="1"><path d="M1190.3 243.6 V240.8 H1193.4 M1201.6 240.8 H1204.6 V243.6 M1204.6 252.4 V255.3 H1201.6 M1193.4 255.3 H1190.3 V252.4"/></g><g stroke="#9d9d9d" stroke-width="1.5"><path d="M1193.8 244.2 L1201.2 251.9 M1201.2 244.2 L1193.8 251.9"/></g><g fill="#9d9d9d"><path d="M1192.4 242.8 H1195.8 L1192.4 246.2 Z M1202.6 242.8 H1199.2 L1202.6 246.2 Z M1192.4 253.3 H1195.8 L1192.4 249.9 Z M1202.6 253.3 H1199.2 L1202.6 249.9 Z"/></g><g fill="#9d9d9d"><path d="M1220.2 242.2 L1227.3 248.3 L1226.4 249.2 L1220.2 243.9 L1214 249.2 L1213.1 248.3 Z"/><path d="M1220.2 244.9 L1225.3 249.2 V253.5 H1221.6 V250.4 H1218.8 V253.5 H1215.1 V249.2 Z"/><rect x="1223.6" y="242.8" width="1.6" height="3"/></g></svg>
<div class="t lg" style="left:346.4px;top:622.2px;font-size:12px;letter-spacing:0.2px;color:#44535f">trial_14</div>
<div class="t lg" style="left:429.3px;top:622.2px;font-size:12px;letter-spacing:0.2px;color:#44535f">trial_16</div>
<div class="t lg" style="left:512.1px;top:622.2px;font-size:12px;letter-spacing:0.2px;color:#44535f">trial_27</div>
<div class="t lg" style="left:595.0px;top:622.2px;font-size:12px;letter-spacing:0.2px;color:#44535f">trial_22</div>
<div class="t lg" style="left:677.8px;top:622.2px;font-size:12px;letter-spacing:0.2px;color:#44535f">trial_21</div>
<div class="t lg" style="left:760.7px;top:622.2px;font-size:12px;letter-spacing:0.2px;color:#44535f">trial_2</div>
<div class="t lg" style="left:836.2px;top:622.2px;font-size:12px;letter-spacing:0.2px;color:#44535f">trial_20</div>
<div class="t lg" style="left:918.9px;top:622.2px;font-size:12px;letter-spacing:0.2px;color:#44535f">trial_11</div>
<div class="t lg" style="left:1002.2px;top:622.2px;font-size:12px;letter-spacing:0.2px;color:#44535f">trial_17</div>
<div class="t lg" style="left:1084.9px;top:622.2px;font-size:12px;letter-spacing:0.2px;color:#44535f">trial_18</div>
<div class="t lg" style="left:1167.6px;top:622.2px;font-size:12px;letter-spacing:0.2px;color:#44535f">trial_26</div>
<div class="t lg" style="left:346.4px;top:637.3px;font-size:12px;letter-spacing:0.2px;color:#44535f">trial_8</div>
<div class="t lg" style="left:422.3px;top:637.3px;font-size:12px;letter-spacing:0.2px;color:#44535f">trial_23</div>
<div class="t lg" style="left:505.1px;top:637.3px;font-size:12px;letter-spacing:0.2px;color:#44535f">trial_9</div>
<div class="t lg" style="left:581.0px;top:637.3px;font-size:12px;letter-spacing:0.2px;color:#44535f">trial_3</div>
<div class="t lg" style="left:656.5px;top:637.3px;font-size:12px;letter-spacing:0.2px;color:#44535f">trial_10</div>
<div class="t lg" style="left:739.8px;top:637.3px;font-size:12px;letter-spacing:0.2px;color:#44535f">trial_1</div>
<div class="t lg" style="left:815.7px;top:637.3px;font-size:12px;letter-spacing:0.2px;color:#44535f">trial_29</div>
<div class="t lg" style="left:898.6px;top:637.3px;font-size:12px;letter-spacing:0.2px;color:#44535f">trial_12</div>
<div class="t lg" style="left:981.3px;top:637.3px;font-size:12px;letter-spacing:0.2px;color:#44535f">trial_15</div>
<div class="t lg" style="left:1063.9px;top:637.3px;font-size:12px;letter-spacing:0.2px;color:#44535f">trial_24</div>
<div class="t lg" style="left:1146.6px;top:637.3px;font-size:12px;letter-spacing:0.2px;color:#44535f">trial_13</div>
<svg style="left:0;top:0" width="1264" height="718" viewBox="0 0 1264 718"><rect x="319.4" y="627.10" width="22.1" height="2.4" fill="#144a26"/><rect x="402.3" y="627.10" width="22.1" height="2.4" fill="#f8889e"/><rect x="485.1" y="627.10" width="22.1" height="2.4" fill="#3caa60"/><rect x="568.0" y="627.10" width="22.1" height="2.4" fill="#44535f"/><rect x="650.8" y="627.10" width="22.1" height="2.4" fill="#2272b4"/><rect x="733.7" y="627.10" width="22.1" height="2.4" fill="#04867d"/><rect x="809.2" y="627.10" width="22.1" height="2.4" fill="#facb66"/><rect x="891.9" y="627.10" width="22.1" height="2.4" fill="#137dae"/><rect x="975.2" y="627.10" width="22.1" height="2.4" fill="#8396a5"/><rect x="1057.9" y="627.10" width="22.1" height="2.4" fill="#2272b4"/><rect x="1140.6" y="627.10" width="22.1" height="2.4" fill="#8a63bf"/><rect x="319.4" y="642.20" width="22.1" height="2.4" fill="#9e102c"/><rect x="395.3" y="642.20" width="22.1" height="2.4" fill="#facb66"/><rect x="478.1" y="642.20" width="22.1" height="2.4" fill="#2272b4"/><rect x="554.0" y="642.20" width="22.1" height="2.4" fill="#115026"/><rect x="629.5" y="642.20" width="22.1" height="2.4" fill="#e65b77"/><rect x="712.8" y="642.20" width="22.1" height="2.4" fill="#04867d"/><rect x="788.7" y="642.20" width="22.1" height="2.4" fill="#f2be88"/><rect x="871.6" y="642.20" width="22.1" height="2.4" fill="#7a8d9b"/><rect x="954.3" y="642.20" width="22.1" height="2.4" fill="#f8889e"/><rect x="1036.9" y="642.20" width="22.1" height="2.4" fill="#1f272d"/><rect x="1119.6" y="642.20" width="22.1" height="2.4" fill="#b45091"/></svg>
<div class="abs" style="left:1227.6px;top:621px;width:13px;height:29.5px;background:#f6f6f6"></div>
<div class="abs" style="left:1230.8px;top:621.2px;width:7px;height:17.8px;border-radius:3.5px;background:#b3b3b3"></div>
<svg style="left:1242px;top:655.5px" width="8" height="8" viewBox="0 0 8 8"><path d="M6.8 0.4 V6.4 H0.2" fill="none" stroke="#2b2f33" stroke-width="1.9"/></svg>
<div class="abs" style="left:635px;top:565px;width:187.5px;height:96px;background:#fff;border-radius:4px;box-shadow:0 2px 8px rgba(0,0,0,0.16),0 0 1px rgba(0,0,0,0.2)"></div>
<div class="abs" style="left:643px;top:578px;width:11px;height:11px;border-radius:50%;background:#115026"></div>
<div class="t" id="tt1" style="left:662px;top:577px;font-size:13px;color:#2272b4">trial_14 (error)</div>
<div class="t" id="tt2" style="left:643px;top:608px;font-size:13px"><b>error:</b> <span style="letter-spacing:0.38px">0.2688985957457108</span></div>
<svg style="left:646.5px;top:636.5px" width="15" height="11" viewBox="0 0 15 11"><path d="M0.8 5.5 C2.6 2.3 4.9 0.9 7.5 0.9 C10.1 0.9 12.4 2.3 14.2 5.5 C12.4 8.7 10.1 10.1 7.5 10.1 C4.9 10.1 2.6 8.7 0.8 5.5 Z" fill="none" stroke="#44535f" stroke-width="1.2"/><circle cx="7.5" cy="5.5" r="2.3" fill="none" stroke="#44535f" stroke-width="1.2"/></svg>
<!--/RIGHT-->
<!--ARROWS-->
<svg style="left:0;top:0;filter:drop-shadow(0 1px 1.5px rgba(0,40,100,0.35))" width="1264" height="718" viewBox="0 0 1264 718"><polygon points="1050.0,100.0 1081.5,106.1 1075.0,113.2 1095.1,135.3 1081.4,148.5 1060.4,126.1 1053.2,132.1" fill="#3b78ee"/><polygon points="99.4,83.4 130.9,89.5 124.4,96.6 144.5,118.7 130.8,131.9 109.8,109.5 102.6,115.5" fill="#3b78ee"/></svg>
<!--/ARROWS-->
</body></html>
